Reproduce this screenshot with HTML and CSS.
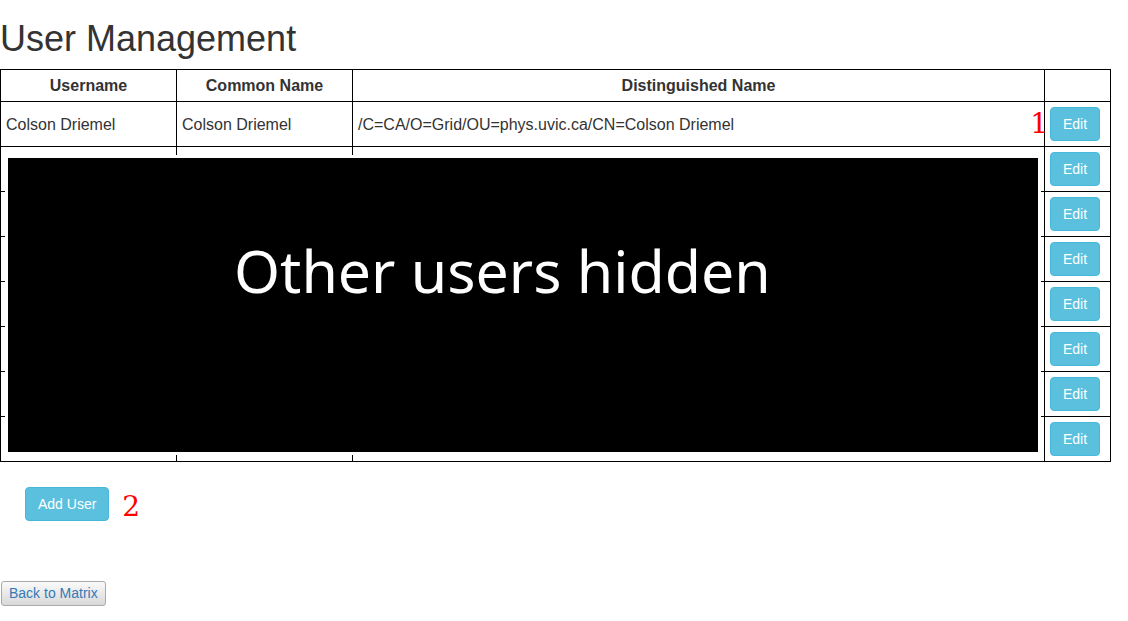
FILE: index.html
```html
<!DOCTYPE html>
<html lang="en">
<head>
<meta charset="utf-8">
<title>User Management</title>
<link rel="stylesheet" href="styles.css">
</head>
<body>
<main class="page">
  <h1 class="title">User Management</h1>
  <div class="users">
    <table class="user-table">
      <colgroup><col class="col-name"><col class="col-name"><col><col class="col-action"></colgroup>
      <thead>
        <tr><th>Username</th><th>Common Name</th><th>Distinguished Name</th><th></th></tr>
      </thead>
      <tbody>
        <tr><td>Colson Driemel</td><td>Colson Driemel</td><td class="dn">/C=CA/O=Grid/OU=phys.uvic.ca/CN=Colson Driemel<span class="mark mark-row">1</span></td><td><button class="btn" type="button">Edit</button></td></tr>
        <tr><td></td><td></td><td></td><td><button class="btn" type="button">Edit</button></td></tr>
        <tr><td></td><td></td><td></td><td><button class="btn" type="button">Edit</button></td></tr>
        <tr><td></td><td></td><td></td><td><button class="btn" type="button">Edit</button></td></tr>
        <tr><td></td><td></td><td></td><td><button class="btn" type="button">Edit</button></td></tr>
        <tr><td></td><td></td><td></td><td><button class="btn" type="button">Edit</button></td></tr>
        <tr><td></td><td></td><td></td><td><button class="btn" type="button">Edit</button></td></tr>
        <tr><td></td><td></td><td></td><td><button class="btn" type="button">Edit</button></td></tr>
      </tbody>
    </table>
    <div class="cover">Other users hidden</div>
  </div>
  <div class="actions">
    <button class="btn" type="button">Add User</button>
    <span class="mark">2</span>
  </div>
  <a class="back" href="#">Back to Matrix</a>
</main>
</body>
</html>
```
FILE: styles.css
```css
* { box-sizing: border-box; }

body {
  margin: 0;
  background: #fff;
  color: #333;
  font: 16px/21px "Liberation Sans", Arial, sans-serif;
}

.page { padding: 19px 17px 15px 0; }

.title {
  margin: 0 0 10px;
  font-size: 36px;
  line-height: 40px;
  font-weight: 400;
}

.users { position: relative; }

.user-table {
  width: 100%;
  border-collapse: collapse;
  table-layout: fixed;
}

.col-name { width: 176px; }
.col-action { width: 66px; }

.user-table th,
.user-table td {
  padding: 5px;
  border: 1px solid #000;
}

.user-table th { text-align: center; }
.user-table td { text-align: left; }

.dn { position: relative; }

.btn {
  display: block;
  padding: 6px 12px;
  border: 1px solid #46b8da;
  border-radius: 4px;
  background: #5bc0de;
  color: #fff;
  font: 14px/20px "Liberation Sans", Arial, sans-serif;
}

.mark {
  padding-top: 6px;
  color: #f00;
  font: 28px/28px "DejaVu Serif", serif;
}

.mark-row {
  position: absolute;
  right: -4px;
  top: 2px;
}

.cover {
  position: absolute;
  inset: 89px 73px 10px 8px;
  padding: 68px 0 0 226px;
  background: #000;
  box-shadow: 0 0 0 3px #fff;
  color: #fff;
  font: 59px/88px "Noto Sans", sans-serif;
}

.actions {
  display: flex;
  align-items: center;
  gap: 13px;
  padding: 25px 25px 60px;
}

.back {
  display: inline-block;
  margin-left: 1px;
  padding: 2px 7px;
  border: 1px solid #aaa;
  border-radius: 3px;
  background: linear-gradient(#fafafa, #d8d8d8);
  color: #337ab7;
  font-size: 14px;
  line-height: 19px;
  text-decoration: none;
}
```
